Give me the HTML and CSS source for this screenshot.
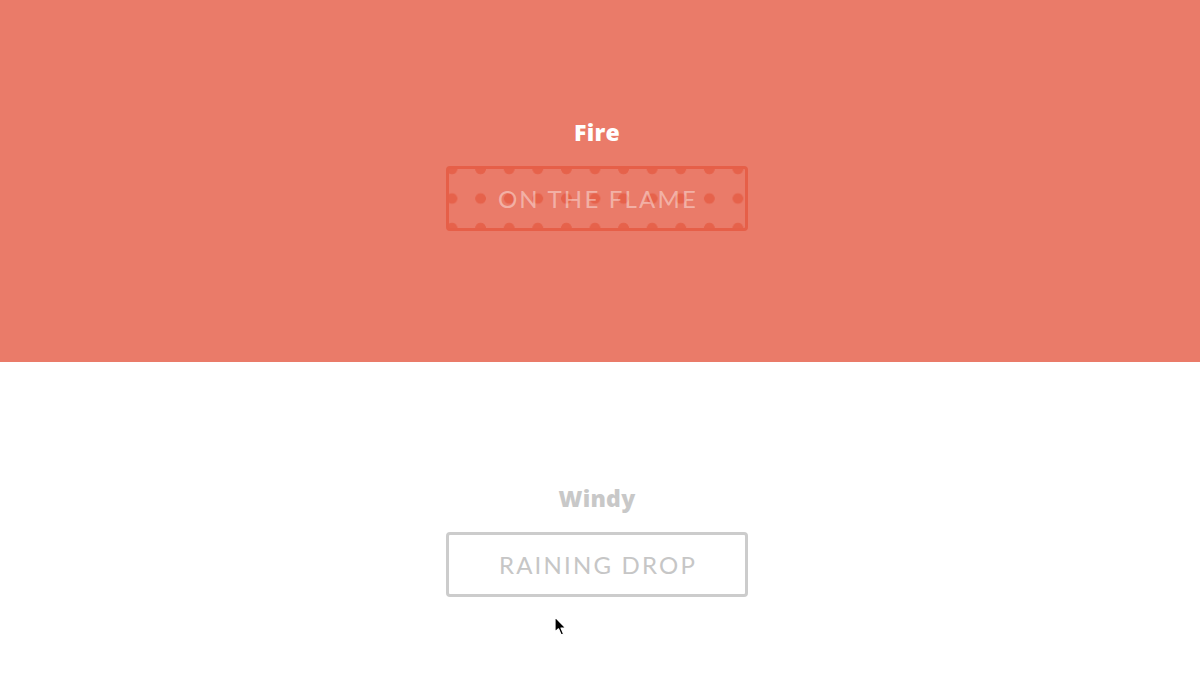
FILE: index.html
```html
<!DOCTYPE html>
<html>
<head>
<meta charset="utf-8">
<link rel="stylesheet" href="styles.css">
</head>
<body>
<section class="panel fire">
  <h2 class="title">Fire</h2>
  <button class="btn btn-fire">ON THE FLAME</button>
</section>
<section class="panel windy">
  <h2 class="title">Windy</h2>
  <button class="btn btn-windy">RAINING DROP</button>
</section>
<svg class="cursor" width="14" height="22" viewBox="0 0 14 22">
  <path d="M1 1 L1 16 L4.5 12.8 L7.2 19 L9.6 18 L7 12 L11.8 12 Z" fill="#000" stroke="#fff" stroke-width="1.2" stroke-linejoin="round"/>
</svg>
</body>
</html>
```
FILE: styles.css
```css
html, body {
  margin: 0;
  padding: 0;
  overflow: hidden;
}
body {
  width: 1200px;
  height: 680px;
  font-family: "Lato", "Liberation Sans", sans-serif;
  position: relative;
}
.panel {
  height: 362px;
  box-sizing: border-box;
  display: flex;
  flex-direction: column;
  align-items: center;
  padding-right: 6px;
}
.fire {
  background: #ea7b69;
  padding-top: 117px;
}
.windy {
  background: #ffffff;
  padding-top: 121px;
}
.title {
  margin: 0;
  font-family: "Open Sans", "Lato", sans-serif;
  font-weight: 800;
  font-size: 23px;
  line-height: 30px;
  letter-spacing: 0.3px;
}
.fire .title { color: #ffffff; }
.windy .title { color: #c8c8c8; }
.btn {
  margin-top: 19px;
  width: 302px;
  height: 65px;
  box-sizing: border-box;
  border: 3px solid;
  border-radius: 4px;
  background: transparent;
  font-family: "Lato", sans-serif;
  font-size: 24px;
  font-weight: 400;
  letter-spacing: 2.2px;
  padding: 0 0 0 2px;
  display: flex;
  align-items: center;
  justify-content: center;
}
.btn-fire {
  border-color: #e65f48;
  color: rgba(255, 255, 255, 0.42);
  background-image: radial-gradient(circle, #e6624b 5px, transparent 5.6px);
  background-size: 28.6px 29.5px;
  background-position: -11.3px -14.75px;
}
.btn-windy {
  border-color: #cccccc;
  color: #c6c6c6;
}
.cursor {
  position: absolute;
  left: 554px;
  top: 616px;
}
```
